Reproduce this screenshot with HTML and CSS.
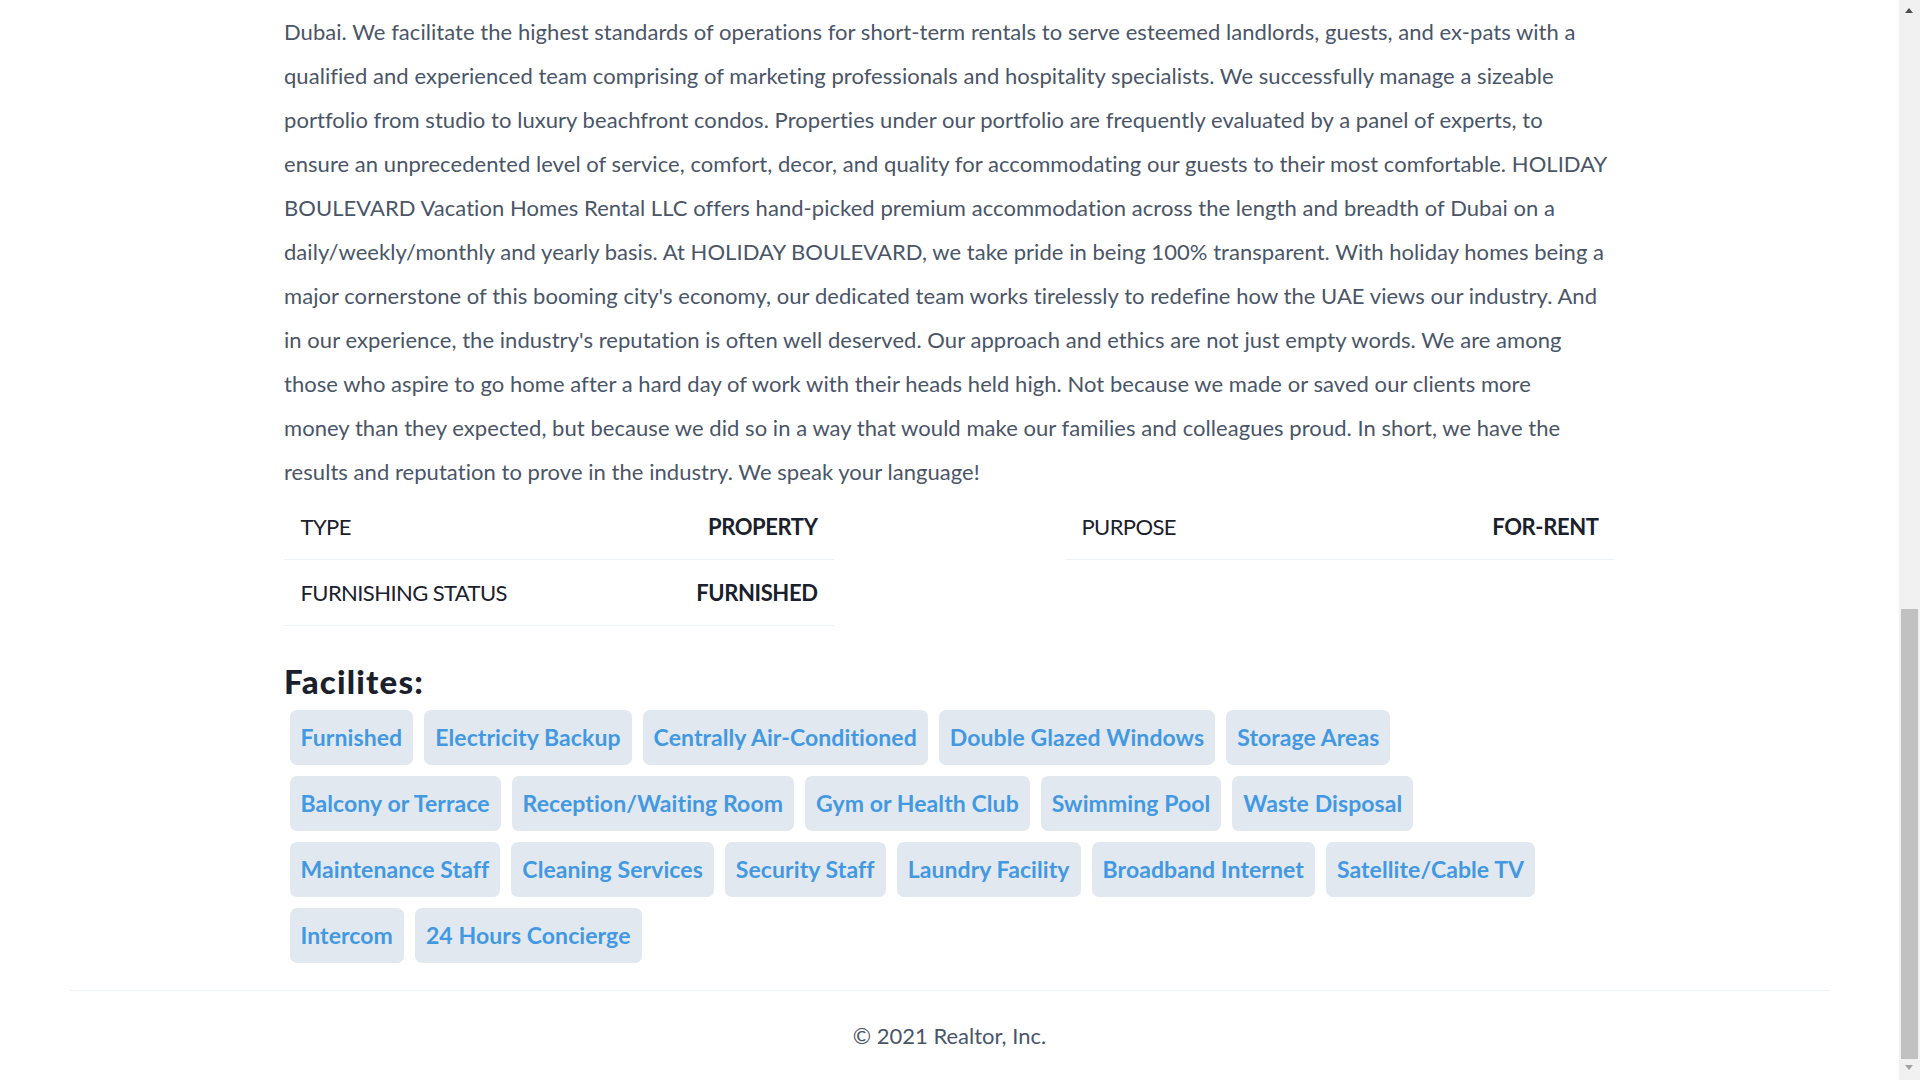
FILE: index.html
```html
<!DOCTYPE html>
<html lang="en">
<head>
<meta charset="utf-8">
<title>Holiday Boulevard – Realtor</title>
<link rel="stylesheet" href="styles.css">
</head>
<body>
<div class="viewport">
  <div class="layout">
    <main class="property">
      <p class="description">HOLIDAY BOULEVARD Vacation Homes Rental LLC is a trusted and fast growing holiday homes company operating in<br>Dubai. We facilitate the highest standards of operations for short-term rentals to serve esteemed landlords, guests, and ex-pats with a<br>qualified and experienced team comprising of marketing professionals and hospitality specialists. We successfully manage a sizeable<br>portfolio from studio to luxury beachfront condos. Properties under our portfolio are frequently evaluated by a panel of experts, to<br>ensure an unprecedented level of service, comfort, decor, and quality for accommodating our guests to their most comfortable. HOLIDAY<br>BOULEVARD Vacation Homes Rental LLC offers hand-picked premium accommodation across the length and breadth of Dubai on a<br>daily/weekly/monthly and yearly basis. At HOLIDAY BOULEVARD, we take pride in being 100% transparent. With holiday homes being a<br>major cornerstone of this booming city's economy, our dedicated team works tirelessly to redefine how the UAE views our industry. And<br>in our experience, the industry's reputation is often well deserved. Our approach and ethics are not just empty words. We are among<br>those who aspire to go home after a hard day of work with their heads held high. Not because we made or saved our clients more<br>money than they expected, but because we did so in a way that would make our families and colleagues proud. In short, we have the<br>results and reputation to prove in the industry. We speak your language!</p>

      <div class="details">
        <div class="detail-row"><span class="detail-label">Type</span><span class="detail-value">Property</span></div>
        <div class="detail-row"><span class="detail-label">Purpose</span><span class="detail-value">for-rent</span></div>
        <div class="detail-row"><span class="detail-label">Furnishing Status</span><span class="detail-value">furnished</span></div>
      </div>

      <h2 class="facilities-title">Facilites:</h2>
      <div class="facilities">
        <span class="tag">Furnished</span>
        <span class="tag">Electricity Backup</span>
        <span class="tag">Centrally Air-Conditioned</span>
        <span class="tag">Double Glazed Windows</span>
        <span class="tag">Storage Areas</span>
        <span class="tag">Balcony or Terrace</span>
        <span class="tag">Reception/Waiting Room</span>
        <span class="tag">Gym or Health Club</span>
        <span class="tag">Swimming Pool</span>
        <span class="tag">Waste Disposal</span>
        <span class="tag">Maintenance Staff</span>
        <span class="tag">Cleaning Services</span>
        <span class="tag">Security Staff</span>
        <span class="tag">Laundry Facility</span>
        <span class="tag">Broadband Internet</span>
        <span class="tag">Satellite/Cable TV</span>
        <span class="tag">Intercom</span>
        <span class="tag">24 Hours Concierge</span>
      </div>
    </main>

    <footer class="footer">© 2021 Realtor, Inc.</footer>
  </div>
</div>

<div class="scrollbar" aria-hidden="true">
  <span class="scroll-arrow scroll-up"></span>
  <span class="scroll-track"><span class="scroll-thumb"></span></span>
  <span class="scroll-arrow scroll-down"></span>
</div>
</body>
</html>
```
FILE: styles.css
```css
html, body {
  margin: 0;
  padding: 0;
  height: 100%;
  overflow: hidden;
  background: #ffffff;
}

body {
  font-family: "Lato", "Open Sans", "Liberation Sans", sans-serif;
  font-size: 22px;
  line-height: 1.5;
  color: #1A202C;
}

.viewport {
  width: calc(100% - 21px);
  height: 100%;
  overflow: hidden;
}

.layout {
  max-width: 1760px;
  margin: 0 auto;
}

.property {
  max-width: 1375px;
  margin: -34px auto 0;
  padding: 0 22px 22px;
  box-sizing: border-box;
}

.description {
  margin: 0;
  line-height: 44px;
  letter-spacing: 0.05px;
  color: #4A5568;
}

.details {
  display: flex;
  flex-wrap: wrap;
  justify-content: space-between;
  text-transform: uppercase;
}

.detail-row {
  display: flex;
  justify-content: space-between;
  width: 550px;
  padding: 15.5px 16.5px 16.5px;
  box-sizing: border-box;
  border-bottom: 1px solid #EDF2F7;
  line-height: 33px;
}

.detail-label {
  letter-spacing: -0.6px;
}

.detail-value {
  font-weight: 700;
  letter-spacing: -0.4px;
}

.facilities-title {
  margin: 32.5px 0 0;
  font-size: 33px;
  line-height: 45.5px;
  font-weight: 900;
  letter-spacing: 1.2px;
  color: #1A202C;
}

.facilities {
  display: flex;
  flex-wrap: wrap;
  max-width: 1296px;
}

.tag {
  margin: 5.5px;
  padding: 11px;
  background: #E2E8F0;
  color: #4299E1;
  font-size: 23px;
  font-weight: 700;
  letter-spacing: 0.08px;
  line-height: 33px;
  border-radius: 7px;
}

.footer {
  border-top: 1px solid #EDF2F7;
  padding: 27.5px;
  text-align: center;
  color: #4A5568;
  line-height: 33px;
}

.scrollbar {
  position: fixed;
  top: 0;
  right: 0;
  width: 21px;
  height: 100%;
  background: #F1F1F1;
  display: flex;
  flex-direction: column;
}

.scroll-arrow {
  height: 21px;
  flex: none;
  position: relative;
}

.scroll-arrow::before {
  content: "";
  position: absolute;
  left: 6px;
  border-left: 4.5px solid transparent;
  border-right: 4.5px solid transparent;
}

.scroll-up::before {
  top: 8px;
  border-bottom: 5px solid #505050;
}

.scroll-down::before {
  top: 6px;
  border-top: 5px solid #A3A3A3;
}

.scroll-track {
  flex: 1;
  display: flex;
  flex-direction: column;
  justify-content: flex-end;
  padding: 0 2px;
}

.scroll-thumb {
  height: 450px;
  background: #C1C1C1;
}
```
